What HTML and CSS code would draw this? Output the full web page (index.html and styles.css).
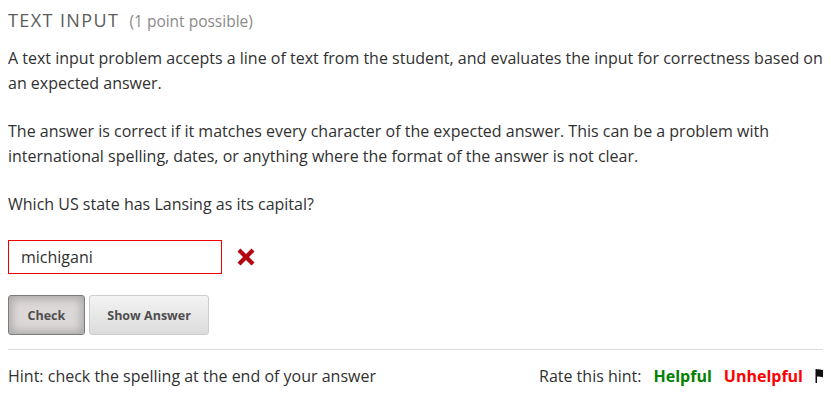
FILE: index.html
```html
<!DOCTYPE html>
<html>
<head>
<meta charset="utf-8">
<link rel="stylesheet" href="styles.css">
</head>
<body>
<div class="problem">
  <h3 class="title">TEXT INPUT <span class="points">(1 point possible)</span></h3>
  <p>A text input problem accepts a line of text from the student, and evaluates the input for correctness based on an expected answer.</p>
  <p>The answer is correct if it matches every character of the expected answer. This can be a problem with international spelling, dates, or anything where the format of the answer is not clear.</p>
  <p>Which US state has Lansing as its capital?</p>
  <div class="answer-row">
    <div class="input">michigani</div>
    <svg class="xmark" width="20" height="20" viewBox="0 0 20 20"><path d="M1.5 4.5 L4.5 1.5 L10 7 L15.5 1.5 L18.5 4.5 L13 10 L18.5 15.5 L15.5 18.5 L10 13 L4.5 18.5 L1.5 15.5 L7 10 Z" fill="#b20610"/></svg>
  </div>
  <div class="actions">
    <button class="btn btn-pressed">Check</button>
    <button class="btn">Show Answer</button>
  </div>
  <div class="hint">
    <span class="hint-text">Hint: check the spelling at the end of your answer</span>
    <span class="rate">Rate this hint:<span class="helpful">Helpful</span><span class="unhelpful">Unhelpful</span><svg class="flag" width="11" height="14" viewBox="0 0 11 14"><path d="M0.5 0 H2 V14 H0.5 Z M2 0.5 C4 -0.3 6 1.3 8 0.8 C9 0.6 10 0.2 11 0.2 V7.5 C10 7.5 9 8 8 8.2 C6 8.6 4 7 2 7.8 Z" fill="#111"/></svg></span>
  </div>
</div>
</body>
</html>
```
FILE: styles.css
```css
body {
  margin: 8px;
  font-family: "Open Sans", sans-serif;
  color: #313131;
  background: #fff;
}
.problem {
  width: 818px;
}
.title {
  margin: 0;
  font-size: 18px;
  font-weight: 400;
  letter-spacing: 1.4px;
  color: #5c5c5c;
  line-height: 25px;
}
.points {
  font-size: 15.5px;
  letter-spacing: 0;
  color: #8a8a8a;
  margin-left: 4px;
}
p {
  font-size: 16px;
  line-height: 25px;
  margin: 12px 0 23px;
}
.answer-row {
  display: flex;
  align-items: center;
  gap: 14px;
}
.input {
  width: 188px;
  height: 32px;
  border: 1px solid #e00;
  padding: 0 12px;
  font-size: 16px;
  line-height: 32px;
  color: #313131;
}
.xmark {
  display: block;
}
.actions {
  display: flex;
  gap: 4px;
  margin-top: 21px;
}
.btn {
  font-family: "Open Sans", sans-serif;
  font-weight: 700;
  font-size: 12.5px;
  color: #4e4e4e;
  height: 40px;
  padding: 0 17.5px;
  border: 1px solid #cdcdcd;
  border-radius: 3px;
  background: linear-gradient(#f3f3f3, #dcdcdc);
}
.btn-pressed {
  border: 1px solid #7c7c7c;
  background: #dcd8d8;
  box-shadow: inset 0 0 8px 3px rgba(0,0,0,0.22);
  padding: 0 18.5px;
}
.hint {
  margin-top: 14px;
  border-top: 1px solid #ddd;
  padding-top: 14px;
  display: flex;
  justify-content: space-between;
  font-size: 16px;
  line-height: 25px;
}
.rate {
  display: flex;
  align-items: center;
  flex-shrink: 0;
}
.helpful {
  color: #008100;
  font-weight: 700;
  margin-left: 12px;
  margin-right: 12px;
}
.unhelpful {
  color: #f00;
  font-weight: 700;
  margin-right: 12px;
}
.flag {
  display: block;
  flex-shrink: 0;
  margin-top: -2px;
}
```
